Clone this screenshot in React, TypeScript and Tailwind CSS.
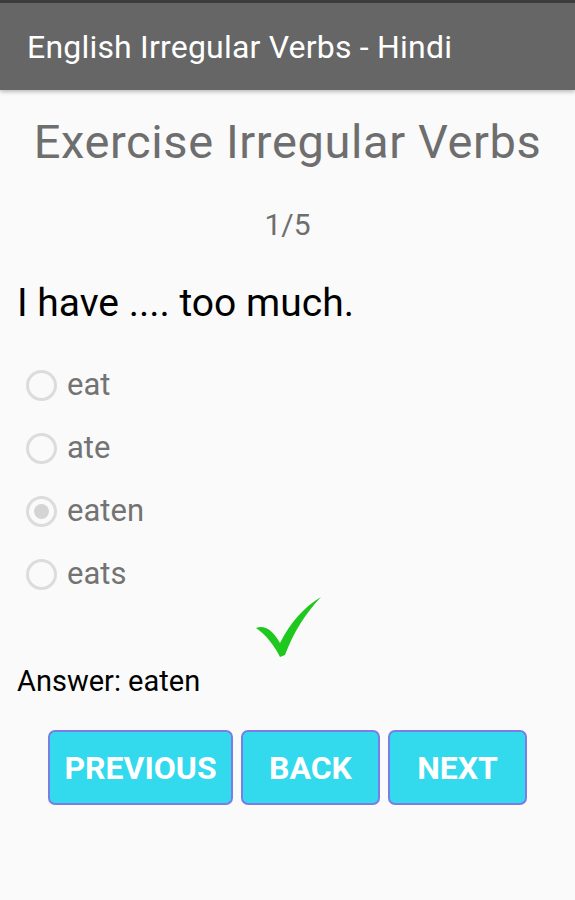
import React from "react";

const options = ["eat", "ate", "eaten", "eats"];

function Radio({ checked }: { checked: boolean }) {
  return (
    <span className="flex h-[31px] w-[31px] items-center justify-center rounded-full border-[3px] border-[#dcdcdc]">
      {checked && <span className="h-[15px] w-[15px] rounded-full bg-[#d4d4d4]" />}
    </span>
  );
}

export default function App() {
  return (
    <div className="h-[900px] w-[575px] bg-[#fafafa] font-['Roboto',sans-serif]">
      {/* Action bar */}
      <div className="border-t-[3px] border-[#3c3c3c] bg-[#666666] shadow-[0_2px_4px_rgba(0,0,0,0.25)]">
        <div className="flex h-[87px] items-center pl-[27px] text-[32px] tracking-[0.2px] text-white">
          English Irregular Verbs - Hindi
        </div>
      </div>

      <div className="flex flex-col">
        <h1 className="mt-[24px] text-center text-[47px] leading-[56px] tracking-[0.6px] text-[#6e6e6e]">
          Exercise Irregular Verbs
        </h1>
        <div className="mt-[37px] text-center text-[30px] leading-[36px] text-[#6e6e6e]">1/5</div>
        <div className="mt-[37px] pl-[17px] text-[39px] leading-[46px] text-black">I have .... too much.</div>

        <div className="mt-[38px] flex flex-col gap-[21px] pl-[26px]">
          {options.map((o) => (
            <label key={o} className="flex h-[42px] items-center gap-[10px]">
              <Radio checked={o === "eaten"} />
              <span className="text-[31px] text-[#737373]">{o}</span>
            </label>
          ))}
        </div>

        <div className="flex justify-center pl-[2px]">
          <svg width="70" height="64" viewBox="0 0 70 64">
            <path
              d="M2 33 C 10 30 18 34 26 48 C 36 28 50 12 67 2 C 52 18 40 36 31 60 L 26 62 C 20 50 12 40 2 33 Z"
              fill="#1ec81e"
            />
          </svg>
        </div>

        <div className="mt-[4px] pl-[17px] text-[29px] leading-[36px] text-black">Answer: eaten</div>

        <div className="mt-[31px] flex justify-center gap-[8px]">
          <button className="h-[75px] w-[185px] rounded-[7px] border-2 border-[#7c7ce6] bg-[#33d9ec] text-[32px] font-bold text-white">
            PREVIOUS
          </button>
          <button className="h-[75px] w-[139px] rounded-[7px] border-2 border-[#7c7ce6] bg-[#33d9ec] text-[32px] font-bold text-white">
            BACK
          </button>
          <button className="h-[75px] w-[139px] rounded-[7px] border-2 border-[#7c7ce6] bg-[#33d9ec] text-[32px] font-bold text-white">
            NEXT
          </button>
        </div>
      </div>
    </div>
  );
}
